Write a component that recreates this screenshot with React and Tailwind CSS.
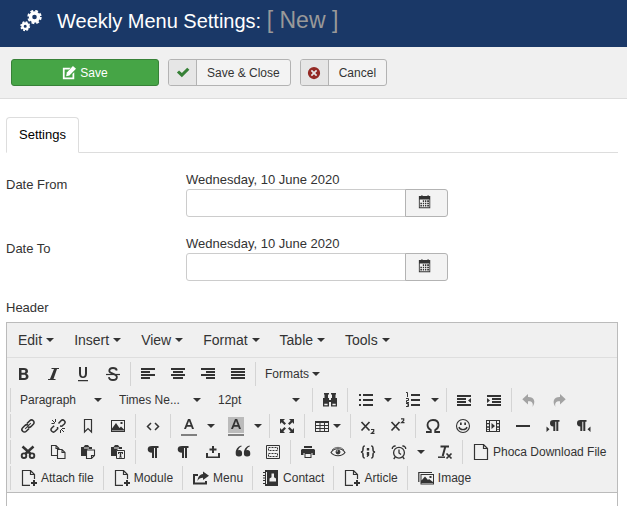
import React from "react";

const shapes = {
  bold: <path fillRule="evenodd" d="M4 2h5c2.300 0 4 1.200 4 3.200 0 1.200-.6 2-1.600 2.500 1.300.5 2.100 1.500 2.100 2.900C13.500 12.800 11.800 14 9.300 14H4zm2.500 2v2.800h2.200c1 0 1.700-.5 1.700-1.400S9.700 4 8.700 4zm0 4.700V12H9c1.200 0 1.900-.6 1.900-1.600S10.200 8.700 9 8.700z" />,
  italic: <path d="M6.500 2H14v1h-2L8.500 13h2v1H3v-1h2L9 3H6.500z" />,
  underline: <path d="M3 14h10v1.200H3zM4 1h2v6.500C6 9.500 6.800 10.500 8 10.500s2-1 2-3V1h2v6.500c0 3-1.500 4.500-4 4.500s-4-1.500-4-4.500z" />,
  strike: (
    <g fill="none" stroke="currentColor">
      <path strokeWidth="1.800" d="M11.800 4.500C11.500 2.800 10 2 8 2 5.800 2 4.300 3.100 4.300 4.900 4.300 8 11.900 7.200 11.900 11c0 1.900-1.600 3-3.900 3-2.400 0-3.900-1-4.100-2.900" />
      <path strokeWidth="1.200" d="M1 8.500h14" />
    </g>
  ),
  left: <path d="M1 2h14v2H1zM1 5h9v2H1zM1 8h14v2H1zM1 11h9v2H1z" />,
  center: <path d="M1 2h14v2H1zM3 5h10v2H3zM1 8h14v2H1zM3 11h10v2H3z" />,
  right: <path d="M1 2h14v2H1zM6 5h9v2H6zM1 8h14v2H1zM6 11h9v2H6z" />,
  justify: <path d="M1 2h14v2H1zM1 5h14v2H1zM1 8h14v2H1zM1 11h14v2H1z" />,
  search: <path fillRule="evenodd" d="M2 1h5v1.500H6V6h1v2h2V6h1V2.500H9V1h5v1.500h-.5V6H15v8.500H9V10H7v4.500H1V6h1.500V2.500H2zM2.300 11.700v1.500h3.300v-1.500zM10.400 11.700v1.500h3.300v-1.500z" />,
  bullets: <path d="M5 2h10v2H5zM5 7h10v2H5zM5 12h10v2H5zM1 2h2v2H1zM1 7h2v2H1zM1 12h2v2H1z" />,
  numbers: (
    <g>
      <path d="M6 2h9v2H6zM6 7h9v2H6zM6 12h9v2H6z" />
      <path fill="none" stroke="currentColor" d="M1 .5h1.500V5M1 6.500h2.500v2h-2v2H4M1 11.500h2.500v3H1M2 13h1.500" />
    </g>
  ),
  outdent: <path d="M1 3h14v2H1zM1 6h9v2H1zM1 9h9v2H1zM1 12h14v2H1zM15 6v5l-3-2.500z" />,
  indent: <path d="M1 3h14v2H1zM6 6h9v2H6zM6 9h9v2H6zM1 12h14v2H1zM1 6v5l3-2.500z" />,
  undo: <path d="M7 2v3c6-.3 8.300 4.500 4.500 10C12.500 10.800 11 9 7 9.200V12.500L1.300 7.200z" />,
  redo: <path d="M9 2v3c-6-.3-8.300 4.500-4.500 10C3.500 10.800 5 9 9 9.200V12.500L14.700 7.200z" />,
  link: (
    <g fill="none" stroke="currentColor" strokeWidth="1.600" transform="rotate(-45 8 8)">
      <path d="M7 10.500H3a2.500 2.500 0 0 1 0-5H6.500a2.500 2.500 0 0 1 2.300 2M9 5.500h4a2.500 2.500 0 0 1 0 5H9.500a2.500 2.500 0 0 1-2.300-2" />
      <path d="M4 8h8" strokeWidth="1" />
    </g>
  ),
  unlink: (
    <g fill="none" stroke="currentColor">
      <path strokeWidth="1.500" d="M8.500 5.500L11 2.700a2.300 2.300 0 0 1 3.300 3.300L11.800 8.300L10 8M4.200 7.800L1.800 10a2.300 2.300 0 0 0 3.300 3.300l2.600-2.600L7.500 9" />
      <path d="M5.500 1v3M1.500 5.500h3M2 2l3 3M10.500 12v3M12 10.500h3M11 11l3 3" />
    </g>
  ),
  bookmark: <path fill="none" stroke="currentColor" strokeWidth="1.200" d="M4.500 1.500h7v12.500L8 10.500 4.500 14z" />,
  image: <path fillRule="evenodd" d="M1 2h14v12H1zm1 1v10h12V3zm0 9.500V10.500L6 5l3.500 5 1.500-1.500 3 3v1zM10.500 4h2v2h-2z" />,
  code: <path fill="none" stroke="currentColor" strokeWidth="1.500" d="M6 5L2.500 8.500 6 12M10 5l3.500 3.500L10 12" />,
  letter: <path fillRule="evenodd" d="M7 2h2.200L13 12h-2l-.8-2.300H5.900L5 12H3zm1 2L6.500 8h3.100z" />,
  full: <path d="M1 1h5L4.300 2.700l2.700 2.700L5.400 7 2.700 4.300 1 6zM15 1v5l-1.700-1.700L10.600 7 9 5.400l2.700-2.700L10 1zM1 15v-5l1.700 1.700L5.400 9 7 10.600l-2.700 2.700L6 15zM15 15h-5l1.700-1.700L9 10.600 10.600 9l2.700 2.700L15 10z" />,
  table: <path fillRule="evenodd" d="M1 3h14v11H1zm1 2v2h3.500V5zm4.500 0v2H10V5zM11 5v2h3V5zM2 8v2h3.500V8zm4.500 0v2H10V8zM11 8v2h3V8zM2 11v2h3.500v-2zm4.500 0v2H10v-2zm4.500 0v2h3v-2z" />,
  sub: (
    <g fill="none" stroke="currentColor">
      <path strokeWidth="1.700" d="M1.500 4l8 8.500M9.500 4l-8 8.500" />
      <path strokeWidth="1.200" d="M11 11.500h2.700v1.700L11.500 15.400H14.500" />
    </g>
  ),
  sup: (
    <g fill="none" stroke="currentColor">
      <path strokeWidth="1.700" d="M1.500 4l8 8.500M9.500 4l-8 8.500" />
      <path strokeWidth="1.200" d="M11 .8h2.700v1.600L11.500 4.700H14.500" />
    </g>
  ),
  omega: <path fill="none" stroke="currentColor" strokeWidth="1.800" d="M1 14h4.800v-2C3.700 11 2.500 9.300 2.500 7 2.500 3.900 4.800 2 8 2s5.500 1.900 5.500 5c0 2.300-1.200 4-3.300 5v2H15" />,
  smile: (
    <g>
      <circle cx="8" cy="8" r="6.500" fill="none" stroke="currentColor" strokeWidth="1.100" />
      <path d="M5 4.500h1.700v2.500H5zM9.300 4.500H11v2.500H9.300z" />
      <path fill="none" stroke="currentColor" strokeWidth="1.300" d="M4 9c.7 3.500 7.300 3.500 8 0" />
    </g>
  ),
  media: <path fillRule="evenodd" d="M1 2h14v12H1zm1 1v2h2V3zm0 3.300v2h2v-2zm0 3.400v1.500h2V9.700zM2 12v1h2v-1zm10-9v2h2V3zm0 3.300v2h2v-2zm0 3.400v1.500h2V9.700zm0 2.300v1h2v-1zM5 3v10h6V3zm1.500 2L10 8l-3.500 3z" />,
  hr: <path d="M1 7h14v2H1z" />,
  ltr: <path d="M14.500 2v1.700h-1.200V13h-2V3.700h-1V13h-2V8.500C5.800 8.500 5 7 5 5.200 5 3.200 6 2 8.500 2zM1.500 8.500v5.500l3-2.750z" />,
  rtl: <path d="M11.500 2v1.700h-1.200V13h-2V3.700h-1V13h-2V8.500C2.800 8.500 2 7 2 5.200 2 3.200 3 2 5.500 2zM15.500 8.500v5.500l-3-2.750z" />,
  cut: (
    <g fill="none" stroke="currentColor" strokeWidth="1.900">
      <circle cx="4" cy="11.700" r="2.300" />
      <circle cx="12" cy="11.700" r="2.300" />
      <path strokeWidth="2.500" d="M2.500 2.500L10.500 9.700M13.500 2.500L5.500 9.700" />
    </g>
  ),
  copy: (
    <g stroke="currentColor" strokeWidth="1.100">
      <path fill="none" d="M7 11.500H1.500v-10h4.500l3 3v1M6 1.500v3h3" />
      <path fill="none" d="M7.500 5.500H12l3 3v6H7.500zM12 5.500v3h3" />
    </g>
  ),
  paste: (
    <g>
      <path d="M1 3h2.500l1.500-2h3l1.500 2H12v2H8L6 7v5H1z" />
      <path fill="#f0f0f0" d="M4 3.500h5v1H4z" />
      <path fill="#f0f0f0" stroke="currentColor" strokeWidth="1.100" d="M6.500 6h8v5.500l-3 3h-5zM14.500 11.500h-3v3" />
    </g>
  ),
  pasteText: (
    <g>
      <path d="M1 3h2.500l1.500-2h3l1.500 2H12v2H8L6 7v5H1z" />
      <path fill="#f0f0f0" d="M4 3.500h5v1H4z" />
      <path fill="#f0f0f0" stroke="currentColor" d="M6.500 6.500h8v8h-8z" />
      <path d="M8 8h5v2h-.8l-.3-.9h-.7v3.700h.8v.7H9v-.7h.8V9.100h-.7l-.3.9H8z" />
    </g>
  ),
  pilcrow: <path d="M13.500 2v2H12v10h-2V4H9v10H7V8.700C4 8.700 2.700 7.300 2.700 5.300 2.700 3.200 4 2 7 2z" />,
  nbsp: <path d="M1 9h2v3.500h10V9h2v5H1zM7 2h2v2.500h2.500v2H9V9L7 9V6.500H4.500v-2H7z" />,
  quote: <path d="M6.800 2.300C4.500 3.200 3.500 4.500 3.200 6.200a3.200 3.200 0 1 1-2.500 3C.6 5.500 2.800 2.500 6.200 1.500zM15 2.300c-2.300.9-3.300 2.200-3.600 3.900a3.200 3.200 0 1 1-2.500 3c-.1-3.700 2.100-6.700 5.500-7.700z" />,
  template: (
    <g fill="none" stroke="currentColor">
      <path d="M1.500 1.500h13v13h-13z" />
      <path strokeDasharray="2 1" d="M3.500 3.500h9v3h-9zM3.500 9.500h9v3h-9z" />
    </g>
  ),
  print: <path fillRule="evenodd" d="M4 2h8v2H4zM1 6l1-1h12l1 1v5h-2.500V9h-9v2H1zM4.500 9h7v5h-7zM5.500 10v3h5v-3z" />,
  eye: (
    <g fill="none" stroke="currentColor">
      <path strokeWidth="1.100" d="M1 8.500C4 3.500 12 3.500 15 8.500 12 12.800 4 12.800 1 8.500z" />
      <path strokeWidth=".7" d="M2 6C5 2.500 11 2.500 14 6" />
      <circle cx="8" cy="8" r="2" fill="currentColor" />
      <path d="M6.700 7h1.200" stroke="#f0f0f0" />
    </g>
  ),
  braces: (
    <g>
      <path fill="none" stroke="currentColor" strokeWidth="1.600" d="M4.800 2C3 2 3 3 3 5s0 2.700-2 3c2 .3 2 1 2 3s0 3 1.800 3M11.200 2C13 2 13 3 13 5s0 2.700 2 3c-2 .3-2 1-2 3s0 3-1.800 3" />
      <path d="M6.800 4h2.400v2.400H6.800zM6.800 8h2.400v3.500L7.500 13H6.600l.7-1.800h-.5z" />
    </g>
  ),
  alarm: (
    <g fill="none" stroke="currentColor" strokeWidth="1.300">
      <circle cx="8" cy="8.700" r="5.400" />
      <path d="M1.300 5c-.3-1.900 1.500-3.400 3.400-2.900M14.700 5c.3-1.900-1.500-3.400-3.400-2.900M4.300 13L2.700 15M11.700 13l1.600 2M8 5.500V9l2 1.500" />
    </g>
  ),
  clear: (
    <g fill="none" stroke="currentColor">
      <path strokeWidth="2" d="M3.500 2.500H12M8.200 3L5.700 12" />
      <path strokeWidth="1.500" d="M1 13.200h7" />
      <path strokeWidth="1.700" d="M9.500 9.500l5 5M14.500 9.500l-5 5" />
    </g>
  ),
  file: <path fill="none" stroke="currentColor" strokeWidth="1.200" d="M1.500.5h9l4 4v11h-13zM10.500.5v4h4" />,
  fileAdd: (
    <g>
      <path fill="none" stroke="currentColor" strokeWidth="1.200" d="M9 15.400H1.500V.5h8l4 4V9M9.500.5v4h4" />
      <path d="M12 10h2v2h2v2h-2v2h-2v-2h-2v-2h2z" />
    </g>
  ),
  share: <path d="M0 4h5v2H2v6.500h10V11h2v3.500H0zM10 1.500l6 4.200-6 4.300V7.800C7.500 7.800 5.500 9 4.500 11c.2-3.500 2-6.700 5.500-7z" />,
  contact: <path fillRule="evenodd" d="M2 0h13v16H2v-2H0v-1h2v-2H0v-1h2V8.500H0v-1h2V6H0V5h2V3H0V2h2zM3 2v12h1V2zM8.500 3.500h2.500v3.800l2 1.200v3H6.500v-3l2-1.200z" />,
  pictures: (
    <g>
      <path fill="none" stroke="currentColor" strokeWidth="1.200" d="M.8 12V2.500H14" />
      <path fillRule="evenodd" d="M2.500 4H16v10.500H2.500zm1 1v8.500H15V5zm0 8V10.500L7 6.500l3 3.500 1-1 4 3v1zM11.500 6h2v2h-2z" />
    </g>
  ),
  calendar: <path fillRule="evenodd" d="M2 1h2V0h1v1h6V0h1v1h2v14H1V1zm0 4v9h11V5zM5.500 6h1.500v2H5.500zm2.500 0h1.500v2H8zM10.500 6h2v2h-2zM2.700 8.800h1.800v1.700H2.700zm2.800 0H7v1.700H5.500zm2.500 0h1.500v1.700H8zM10.500 8.800h2v1.700h-2zM2.700 11.300h1.800V13H2.700zm2.800 0H7V13H5.500zm2.500 0h1.500V13H8zM10.500 11.300h2V13h-2z" />,
  edit: (
    <g>
      <path d="M1 2h9L8 4H3v9h9V9l2-2v8H1z" />
      <path d="M12.500 0L16 3.200 8.500 10.800 4.700 11.800 5.500 7.500z" />
    </g>
  ),
  check: <path d="M1 7.500L3.500 5l3.200 2.900L12.800 2 15.300 4.200l-8.600 8.600z" />,
  cancel: <path fillRule="evenodd" d="M8 1a7 7 0 1 1 0 14A7 7 0 0 1 8 1zM5.700 4.300L4.300 5.700 6.600 8l-2.300 2.300 1.400 1.400L8 9.400l2.300 2.300 1.400-1.400L9.400 8l2.300-2.300-1.400-1.400L8 6.600z" />,
};

function Icon({ name, className = "size-4" }) {
  return (
    <svg viewBox="0 0 16 16" fill="currentColor" aria-hidden="true" className={`shrink-0 ${className}`}>
      {shapes[name]}
    </svg>
  );
}

function Caret() {
  return <span aria-hidden="true" className="border-x-4 border-t-4 border-x-transparent border-t-[#333]" />;
}

function Gears() {
  return (
    <svg viewBox="0 0 22 22" fill="none" stroke="white" aria-hidden="true" className="size-[22px]">
      <circle cx="14.500" cy="7" r="4" strokeWidth="3.400" />
      <circle cx="14.500" cy="7" r="6.200" strokeWidth="2" strokeDasharray="2.800 2.070" />
      <circle cx="5.200" cy="16.200" r="2.700" strokeWidth="2.400" />
      <circle cx="5.200" cy="16.200" r="4.200" strokeWidth="1.500" strokeDasharray="1.900 1.400" />
    </svg>
  );
}

function Group({ children }) {
  return <div className="flex h-6 shrink-0 items-center border-l border-[#d4d4d4] px-0.5">{children}</div>;
}

function Tool({ name, label, disabled }) {
  return (
    <button type="button" aria-label={label || name} disabled={disabled} className="flex h-6 w-[30px] items-center justify-center disabled:text-[#a3a3a3]">
      <Icon name={name} />
    </button>
  );
}

function Split({ name, children }) {
  return (
    <div className="flex w-[47px] items-center">
      <button type="button" aria-label={name} className="flex h-6 w-8 items-center justify-center">
        {children || <Icon name={name} />}
      </button>
      <button type="button" aria-label={`${name} options`} className="flex h-6 items-center px-0.5">
        <Caret />
      </button>
    </div>
  );
}

function Picker({ label, value }) {
  return (
    <div className="grid w-[99px] items-center">
      <select aria-label={label} className="col-start-1 row-start-1 h-6 w-full appearance-none pr-6 pl-[7px] text-xs">
        <option>{value}</option>
      </select>
      <span className="pointer-events-none col-start-1 row-start-1 mr-2.5 flex justify-self-end">
        <Caret />
      </span>
    </div>
  );
}

function TextTool({ icon, label }) {
  return (
    <button type="button" className="flex h-6 items-center gap-1 pr-[7px] pl-2 text-xs whitespace-nowrap">
      <Icon name={icon} />
      {label}
    </button>
  );
}

function DateField({ id, label }) {
  return (
    <div className="flex">
      <label htmlFor={id} className="w-[180px] shrink-0 pt-[5px]">{label}</label>
      <div>
        <div>Wednesday, 10 June 2020</div>
        <div className="flex">
          <input id={id} type="text" className="h-7 w-[220px] rounded-l-[3px] border border-[#ccc] bg-white px-1.5 outline-none" />
          <button type="button" aria-label={`Choose ${label}`} className="-ml-px flex h-7 w-[43px] items-center justify-center rounded-r-[3px] border border-[#b3b3b3] bg-[#f3f3f3] pr-1 pb-0.5">
            <Icon name="calendar" className="size-3.5" />
          </button>
        </div>
      </div>
    </div>
  );
}

function ActionButton({ icon, color, children }) {
  return (
    <button type="button" className="flex h-[27px] items-stretch overflow-hidden rounded-[3px] border border-[#b3b3b3] bg-[#f3f3f3] text-xs">
      <span className={`flex w-7 items-center justify-center border-r border-[#b3b3b3] bg-[#e6e6e6] ${color}`}>
        <Icon name={icon} className="size-3.5" />
      </span>
      <span className="self-center px-2.5">{children}</span>
    </button>
  );
}

const menus = ["Edit", "Insert", "View", "Format", "Table", "Tools"];

export default function App() {
  return (
    <div className="flex min-h-screen flex-col bg-white font-['Liberation_Sans',Arial,sans-serif] text-[13px] leading-[18px] text-[#333]">
      <header className="flex h-[47px] items-center bg-[#1a3867] pb-1.5 pl-5">
        <Gears />
        <h1 className="ml-[15px] text-xl leading-8 whitespace-nowrap text-white">
          Weekly Menu Settings: <small className="text-[23px] leading-8 text-[#999]">[ New ]</small>
        </h1>
      </header>

      <div className="flex h-[52px] items-start gap-[9px] border-b border-[#ddd] bg-[#f0f0f0] px-[11px] pt-3">
        <button type="button" className="flex h-[27px] w-[148px] items-center justify-center gap-1 rounded-[3px] border border-[#378137] bg-[#46a546] text-xs text-white">
          <Icon name="edit" className="size-3.5" />
          Save
        </button>
        <ActionButton icon="check" color="text-[#378137]">Save &amp; Close</ActionButton>
        <ActionButton icon="cancel" color="text-[#942a25]">Cancel</ActionButton>
      </div>

      <main className="flex grow flex-col pt-[18px] pr-[9px] pl-1.5">
        <div role="tablist" className="flex border-b border-[#ddd]">
          <button type="button" role="tab" aria-selected="true" className="-mb-px h-9 rounded-t-[4px] border border-[#ddd] border-b-white bg-white px-3 text-black">
            Settings
          </button>
        </div>

        <div className="mt-[18px] flex flex-col gap-[18px]">
          <DateField id="date-from" label="Date From" />
          <DateField id="date-to" label="Date To" />
        </div>
        <label htmlFor="header-text" className="mt-[18px] mb-[5px]">Header</label>

        <section className="flex grow flex-col border border-b-0 border-[#bbb]">
          <div className="flex h-[35px] items-center border-b border-[#dedede] bg-[#f0f0f0] pl-[3px] text-sm">
            {menus.map((menu) => (
              <button key={menu} type="button" className="mr-1 flex items-center gap-1 px-2">
                {menu}
                <Caret />
              </button>
            ))}
          </div>

          <div className="flex flex-col gap-0.5 border-b border-[#bbb] bg-[#f0f0f0] pt-1 pb-0.5">
            <div className="flex">
              <div className="flex pr-0.5 pl-px">
                <Tool name="bold" />
                <Tool name="italic" />
                <Tool name="underline" />
                <Tool name="strike" />
              </div>
              <Group>
                <Tool name="left" />
                <Tool name="center" />
                <Tool name="right" />
                <Tool name="justify" />
              </Group>
              <Group>
                <button type="button" className="flex h-6 items-center gap-[3px] px-[7px] text-xs">
                  Formats
                  <Caret />
                </button>
              </Group>
            </div>

            <div className="flex pl-[3px]">
              <Group>
                <Picker label="Block format" value="Paragraph" />
                <Picker label="Font family" value="Times Ne..." />
                <Picker label="Font size" value="12pt" />
              </Group>
              <Group><Tool name="search" /></Group>
              <Group>
                <Split name="bullets" />
                <Split name="numbers" />
              </Group>
              <Group>
                <Tool name="outdent" />
                <Tool name="indent" />
              </Group>
              <Group>
                <Tool name="undo" disabled />
                <Tool name="redo" disabled />
              </Group>
            </div>

            <div className="flex pl-[3px]">
              <Group>
                <Tool name="link" />
                <Tool name="unlink" />
                <Tool name="bookmark" />
                <Tool name="image" />
              </Group>
              <Group><Tool name="code" /></Group>
              <Group>
                <Split name="text colour">
                  <span className="flex flex-col gap-px">
                    <Icon name="letter" />
                    <span className="h-0.5 bg-[#808080]" />
                  </span>
                </Split>
                <Split name="background colour">
                  <span className="flex flex-col gap-px">
                    <span className="bg-[#bbb]"><Icon name="letter" /></span>
                    <span className="h-0.5 bg-[#808080]" />
                  </span>
                </Split>
              </Group>
              <Group><Tool name="full" /></Group>
              <Group>
                <button type="button" aria-label="Table" className="flex h-6 w-[41px] items-center gap-[3px] pl-[7px]">
                  <Icon name="table" />
                  <Caret />
                </button>
              </Group>
              <Group>
                <Tool name="sub" />
                <Tool name="sup" />
              </Group>
              <Group>
                <Tool name="omega" />
                <Tool name="smile" />
                <Tool name="media" />
                <Tool name="hr" />
                <Tool name="ltr" />
                <Tool name="rtl" />
              </Group>
            </div>

            <div className="flex pl-[3px]">
              <Group>
                <Tool name="cut" />
                <Tool name="copy" />
                <Tool name="paste" />
                <Tool name="pasteText" />
              </Group>
              <Group>
                <Tool name="pilcrow" label="Show blocks" />
                <Tool name="pilcrow" label="Show invisible characters" />
                <Tool name="nbsp" />
                <Tool name="quote" />
                <Tool name="template" />
              </Group>
              <Group>
                <Tool name="print" />
                <Tool name="eye" />
                <Tool name="braces" />
                <Split name="alarm" />
                <Tool name="clear" />
              </Group>
              <Group><TextTool icon="file" label="Phoca Download File" /></Group>
            </div>

            <div className="flex pl-[3px]">
              <Group><TextTool icon="fileAdd" label="Attach file" /></Group>
              <Group><TextTool icon="fileAdd" label="Module" /></Group>
              <Group><TextTool icon="share" label="Menu" /></Group>
              <Group><TextTool icon="contact" label="Contact" /></Group>
              <Group><TextTool icon="fileAdd" label="Article" /></Group>
              <Group><TextTool icon="pictures" label="Image" /></Group>
            </div>
          </div>

          <textarea id="header-text" rows={1} className="min-h-0 w-full grow basis-0 resize-none bg-white px-2 outline-none" />
        </section>
      </main>
    </div>
  );
}
